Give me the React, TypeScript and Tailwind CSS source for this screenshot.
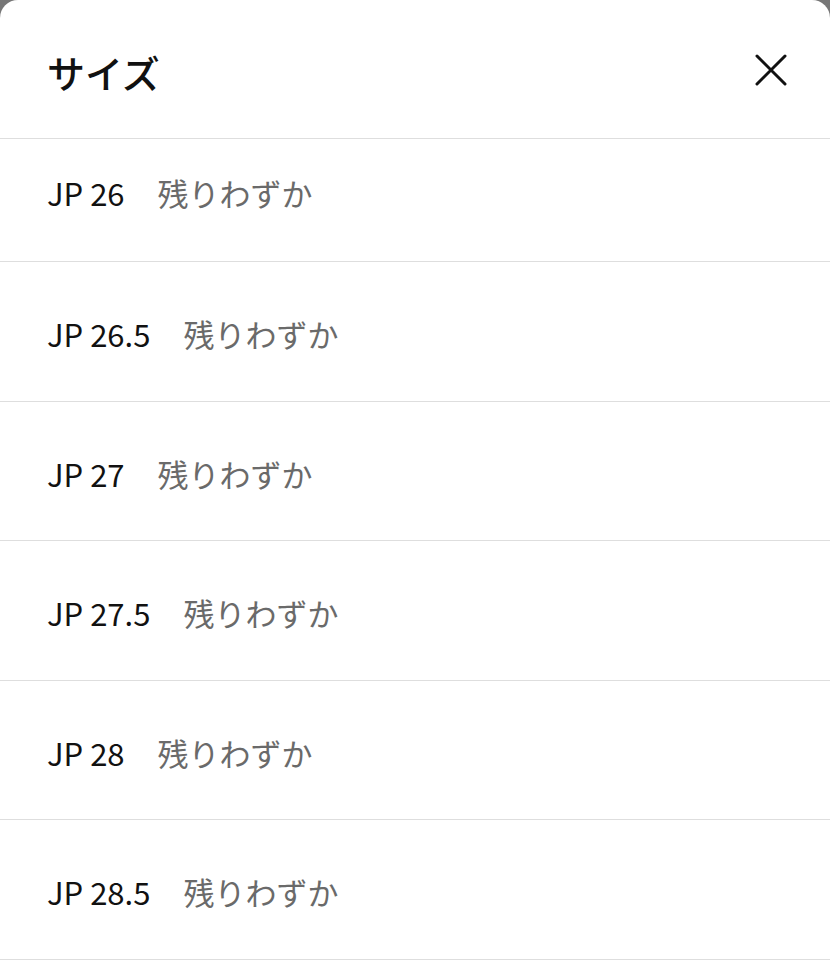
const sizes = ["26", "26.5", "27", "27.5", "28", "28.5"];

function CloseIcon() {
  return (
    <svg width="34" height="34" viewBox="0 0 34 34" fill="none" stroke="#111" strokeWidth="3" strokeLinecap="round">
      <path d="M3 3L31 31M31 3L3 31" />
    </svg>
  );
}

export default function App() {
  return (
    <div className="h-[969px] w-[830px] overflow-hidden bg-[#777777]">
      <div
        className="h-full rounded-t-[18px] bg-white text-[#111111]"
        style={{ fontFamily: "'Noto Sans CJK JP', 'Noto Sans', sans-serif" }}
      >
        {/* header */}
        <div className="flex h-[139px] items-center justify-between border-b border-[#dedede] pl-[47px] pr-[42px]">
          <h2 className="mt-[6px] text-[38px] font-medium leading-none">サイズ</h2>
          <button className="mt-[2px] p-0">
            <CloseIcon />
          </button>
        </div>

        {/* size list */}
        <ul>
          {sizes.map((s, i) => (
            <li
              key={s}
              className={
                i === 0
                  ? "flex h-[123px] items-start border-b border-[#dedede] pl-[47px] pt-[34px]"
                  : "flex h-[139.5px] items-start border-b border-[#dedede] pl-[47px] pt-[52px]"
              }
            >
              <span className="text-[31px] leading-[40px] text-[#111111]">JP {s}</span>
              <span className="ml-[33px] text-[31px] leading-[40px] text-[#6a6a6a]">残りわずか</span>
            </li>
          ))}
        </ul>
      </div>
    </div>
  );
}
